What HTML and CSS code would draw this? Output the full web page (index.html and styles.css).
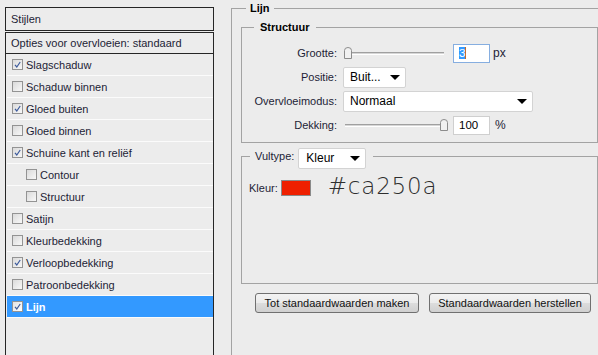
FILE: index.html
```html
<!DOCTYPE html>
<html lang="nl">
<head>
<meta charset="utf-8">
<title>Laagstijl - Lijn</title>
<link rel="stylesheet" href="styles.css">
</head>
<body>
<div class="app">
  <aside class="styles-panel">
    <div class="panel-head">Stijlen</div>
    <div class="style-list">
      <div class="row-opts">Opties voor overvloeien: standaard</div>
      <div class="row"><span class="cb on"><svg viewBox="0 0 9 9"><path d="M2 4.8 L3.8 7 L7.2 2"/></svg></span>Slagschaduw</div>
      <div class="row"><span class="cb"></span>Schaduw binnen</div>
      <div class="row"><span class="cb on"><svg viewBox="0 0 9 9"><path d="M2 4.8 L3.8 7 L7.2 2"/></svg></span>Gloed buiten</div>
      <div class="row"><span class="cb"></span>Gloed binnen</div>
      <div class="row"><span class="cb on"><svg viewBox="0 0 9 9"><path d="M2 4.8 L3.8 7 L7.2 2"/></svg></span>Schuine kant en reliëf</div>
      <div class="row sub"><span class="cb"></span>Contour</div>
      <div class="row sub"><span class="cb"></span>Structuur</div>
      <div class="row"><span class="cb"></span>Satijn</div>
      <div class="row"><span class="cb"></span>Kleurbedekking</div>
      <div class="row"><span class="cb on"><svg viewBox="0 0 9 9"><path d="M2 4.8 L3.8 7 L7.2 2"/></svg></span>Verloopbedekking</div>
      <div class="row"><span class="cb"></span>Patroonbedekking</div>
      <div class="row sel"><span class="cb on"><svg viewBox="0 0 9 9"><path d="M2 4.8 L3.8 7 L7.2 2"/></svg></span>Lijn</div>
    </div>
  </aside>

  <fieldset class="group outer">
    <legend>Lijn</legend>
    <fieldset class="group struct">
      <legend>Structuur</legend>
      <div class="form">
        <span class="lbl">Grootte:</span>
        <div class="ctl">
          <div class="slider">
            <div class="track"></div>
            <svg class="thumb left" viewBox="0 0 8 12"><path d="M0.5 3.5 Q0.5 0.5 4 0.5 Q7.5 0.5 7.5 3.5 V11.5 H0.5 Z"/></svg>
          </div>
          <div class="num focus"><span class="hl">3</span></div>
          <span class="unit">px</span>
        </div>

        <span class="lbl">Positie:</span>
        <div class="ctl">
          <div class="dd dd-pos"><span>Buit...</span><i class="arr"></i></div>
        </div>

        <span class="lbl">Overvloeimodus:</span>
        <div class="ctl">
          <div class="dd dd-mode"><span>Normaal</span><i class="arr"></i></div>
        </div>

        <span class="lbl">Dekking:</span>
        <div class="ctl">
          <div class="slider">
            <div class="track"></div>
            <svg class="thumb right" viewBox="0 0 8 12"><path d="M0.5 3.5 Q0.5 0.5 4 0.5 Q7.5 0.5 7.5 3.5 V11.5 H0.5 Z"/></svg>
          </div>
          <div class="num">100</div>
          <span class="unit pct">%</span>
        </div>
      </div>
    </fieldset>

    <fieldset class="group fill">
      <legend><span class="legend-inner"><span class="lbl">Vultype:</span><span class="dd dd-fill"><span>Kleur</span><i class="arr"></i></span></span></legend>
      <div class="color-row">
        <span class="lbl">Kleur:</span>
        <span class="swatch"></span>
        <span class="hex">#ca250a</span>
      </div>
    </fieldset>

    <div class="buttons">
      <button class="btn btn-make">Tot standaardwaarden maken</button>
      <button class="btn btn-reset">Standaardwaarden herstellen</button>
    </div>
  </fieldset>
</div>
</body>
</html>
```

FILE: styles.css
```css
html, body {
  margin: 0;
  padding: 0;
}
body {
  background: #ececec;
  font-family: "Liberation Sans", Arial, sans-serif;
  font-size: 11px;
  color: #1d1d36;
  height: 355px;
  overflow: hidden;
}
.app {
  display: flex;
  height: 355px;
  padding-left: 5px;
  box-sizing: border-box;
}

/* ---------- left styles list ---------- */
.styles-panel {
  flex: none;
  width: 209px;
  margin-top: 7px;
  display: flex;
  flex-direction: column;
}
.panel-head {
  height: 22px;
  line-height: 22px;
  border: 1px solid #262626;
  padding-left: 5px;
  margin-bottom: 1px;
}
.style-list {
  flex: 1;
  border: 1px solid #262626;
  border-bottom: none;
  padding-left: 1px;
}
.row-opts {
  height: 20px;
  line-height: 20px;
  border-bottom: 1px solid #262626;
  margin-left: -1px;
  padding-left: 5px;
}
.row {
  height: 21px;
  border-bottom: 1px solid #fbfbfb;
  display: flex;
  align-items: center;
  gap: 3px;
  padding-left: 5px;
}
.row.sub {
  padding-left: 19px;
}
.row.sel {
  background: #3399ff;
  color: #fff;
  font-weight: bold;
}
.cb {
  width: 11px;
  height: 11px;
  box-sizing: border-box;
  border: 1px solid #939393;
  background: linear-gradient(135deg, #dadada, #f8f8f8);
  display: flex;
  align-items: center;
  justify-content: center;
  flex: none;
}
.cb svg {
  width: 9px;
  height: 9px;
}
.cb svg path {
  fill: none;
  stroke: #3d5b9c;
  stroke-width: 1.2;
}
.row.sel .cb {
  background: linear-gradient(135deg, #e2e2e2, #ffffff);
}

/* ---------- right side ---------- */
.group {
  margin: 0;
  min-width: 0;
  border: 1px solid #a3a3a3;
}
.group > legend {
  font-weight: bold;
  color: #000;
  line-height: 13px;
}
.outer {
  flex: 1;
  margin: 2px 0 0 17px;
  padding: 6px 0 0 9px;
  border-right: none;
  border-bottom: none;
}
.outer > legend {
  margin-left: 5px;
  padding: 0 4px;
}
.struct {
  padding: 7px 0 5px 0;
}
.struct > legend {
  margin-left: 12px;
  padding: 0 6px;
}
.form {
  display: grid;
  grid-template-columns: 95px auto;
  column-gap: 6px;
  grid-auto-rows: 24px;
  align-items: center;
}
.lbl {
  text-align: right;
  color: #1d1d36;
  font-weight: normal;
}
.ctl {
  display: flex;
  align-items: center;
}
.slider {
  position: relative;
  width: 105px;
  height: 14px;
  display: flex;
  align-items: center;
  margin-right: 5px;
}
.track {
  flex: 1;
  margin: 1px 4px 0 2px;
  height: 1px;
  background: #d6d6d6;
  border-top: 1px solid #a0a0a0;
  border-bottom: 1px solid #ffffff;
}
.thumb {
  position: absolute;
  top: 1px;
  width: 8px;
  height: 12px;
}
.thumb.left { left: 1px; }
.thumb.right { right: 0; }
.thumb path {
  fill: #f1f1f1;
  stroke: #8c8c8c;
  stroke-width: 1;
}
.num {
  width: 37px;
  height: 19px;
  box-sizing: border-box;
  border: 1px solid #cfcfcf;
  background: #fff;
  padding-left: 5px;
  line-height: 17px;
  color: #000;
  font-size: 11.5px;
}
.num.focus {
  border-color: #86aee0;
}
.hl {
  background: #3399ff;
  color: #fff;
  border-right: 1px solid #c06a2a;
}
.unit {
  margin-left: 3px;
  font-size: 12px;
}
.unit.pct {
  margin-left: 5px;
}
.dd {
  display: flex;
  align-items: center;
  justify-content: space-between;
  height: 21px;
  box-sizing: border-box;
  border: 1px solid #d3d3d3;
  border-radius: 2px;
  background: #fff;
  padding: 0 5px 0 6px;
  font-size: 12px;
  color: #000;
  font-weight: normal;
}
.dd-pos { width: 63px; }
.dd-mode { width: 190px; }
.dd-fill { width: 68px; padding-left: 7px; margin-bottom: -4px; }
.arr {
  width: 0;
  height: 0;
  border-left: 5px solid transparent;
  border-right: 5px solid transparent;
  border-top: 5px solid #000;
}

.fill {
  margin-top: 5px;
  padding: 0;
  height: 136px;
  box-sizing: border-box;
}
.fill > legend {
  margin-left: 8px;
  padding: 0 7px 0 5px;
}
.legend-inner {
  display: inline-flex;
  align-items: center;
  gap: 4px;
}
.color-row {
  display: flex;
  align-items: center;
  padding: 14px 0 0 7px;
}
.swatch {
  width: 30px;
  height: 16px;
  box-sizing: border-box;
  border: 1px solid #8a8a8a;
  background: #ee2000;
  margin-left: 3px;
}
.hex {
  margin-left: 17px;
  margin-top: -3px;
  font-family: "DejaVu Sans", sans-serif;
  font-weight: 200;
  font-size: 23px;
  letter-spacing: 0.8px;
  line-height: 20px;
  color: #2e2e2e;
}

.buttons {
  display: flex;
  gap: 10px;
  margin: 9px 0 0 14px;
}
.btn {
  height: 20px;
  box-sizing: border-box;
  border: 1px solid #707070;
  border-radius: 3px;
  background: linear-gradient(#f3f3f3, #ebebeb 50%, #dcdcdc 51%, #d0d0d0);
  font-family: "Liberation Sans", Arial, sans-serif;
  font-size: 11px;
  color: #111;
  padding: 0;
  display: flex;
  align-items: center;
  justify-content: center;
}
.btn-make { width: 164px; }
.btn-reset { width: 162px; }
```
